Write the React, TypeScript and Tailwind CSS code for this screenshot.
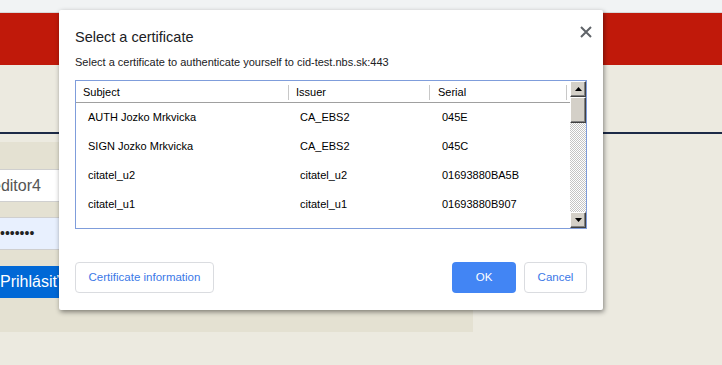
import React from 'react';

const rows = [
  { subject: 'AUTH Jozko Mrkvicka', issuer: 'CA_EBS2', serial: '045E' },
  { subject: 'SIGN Jozko Mrkvicka', issuer: 'CA_EBS2', serial: '045C' },
  { subject: 'citatel_u2', issuer: 'citatel_u2', serial: '01693880BA5B' },
  { subject: 'citatel_u1', issuer: 'citatel_u1', serial: '01693880B907' },
  { subject: 'citatel_u0', issuer: 'citatel_u0', serial: '01693880B6F1' },
];

function ScrollArrow({ up }: { up?: boolean }) {
  return (
    <div className="flex h-[16px] w-[16px] items-center justify-center border border-t-white border-l-white border-r-[#404040] border-b-[#404040] bg-[#d4d0c8] shadow-[inset_-1px_-1px_0_#808080]">
      <svg width="7" height="4" viewBox="0 0 7 4">
        {up ? <path d="M3.5 0 L7 4 L0 4 Z" fill="#000" /> : <path d="M0 0 L7 0 L3.5 4 Z" fill="#000" />}
      </svg>
    </div>
  );
}

function CertDialog() {
  return (
    <div className="absolute left-[59px] top-[10px] w-[544px] rounded-[2px] bg-white px-[16px] pb-[17px] pt-[17px] shadow-[1px_2px_5px_rgba(0,0,0,0.45)] font-['Liberation_Sans',sans-serif]">
      <button className="absolute right-[11px] top-[16px] text-[#5f6368]">
        <svg width="12" height="12" viewBox="0 0 12 12">
          <path d="M1 1 L11 11 M11 1 L1 11" stroke="currentColor" strokeWidth="2" />
        </svg>
      </button>
      <div className="h-[20px] text-[14.5px] leading-[20px] text-[#202124]">Select a certificate</div>
      <div className="mt-[7px] h-[16px] text-[11px] leading-[16px] text-[#202124]">
        Select a certificate to authenticate yourself to cid-test.nbs.sk:443
      </div>

      <div className="mt-[10px] flex h-[149px] border border-[#7f9ddb] text-[11px] text-black">
        <div className="flex-1 overflow-hidden">
          <div className="flex h-[22px] items-center border-b border-[#a0a0a0] pt-[2px]">
            <div className="flex w-[213px] items-center justify-between pl-[7px]">
              <span>Subject</span>
              <span className="h-[15px] w-px bg-[#c8c8c8]" />
            </div>
            <div className="flex w-[141px] items-center justify-between pl-[7px]">
              <span>Issuer</span>
              <span className="h-[15px] w-px bg-[#c8c8c8]" />
            </div>
            <div className="flex w-[137px] items-center justify-between pl-[8px]">
              <span>Serial</span>
              <span className="h-[15px] w-px bg-[#c8c8c8]" />
            </div>
          </div>
          {rows.map((r) => (
            <div key={r.subject} className="flex h-[29px] items-center">
              <div className="w-[213px] pl-[12px]">{r.subject}</div>
              <div className="w-[141px] pl-[11px]">{r.issuer}</div>
              <div className="w-[137px] pl-[12px]">{r.serial}</div>
            </div>
          ))}
        </div>
        <div className="flex w-[16px] flex-col">
          <ScrollArrow up />
          <div className="h-[26px] border border-t-white border-l-white border-r-[#404040] border-b-[#404040] bg-[#d4d0c8] shadow-[inset_-1px_-1px_0_#808080]" />
          <div className="flex-1 bg-[repeating-conic-gradient(#c4c4c4_0_25%,#ffffff_0_50%)] bg-[length:2px_2px]" />
          <ScrollArrow />
        </div>
      </div>

      <div className="mt-[33px] flex h-[31px] items-stretch text-[11.5px]">
        <button className="w-[139px] rounded-[4px] border border-[#dadce0] bg-white text-[#3b78e7]">
          Certificate information
        </button>
        <div className="flex-1" />
        <button className="w-[64px] rounded-[4px] bg-[#4285f4] text-white">OK</button>
        <button className="ml-[8px] w-[63px] rounded-[4px] border border-[#dadce0] bg-white text-[#3b78e7]">
          Cancel
        </button>
      </div>
    </div>
  );
}

export default function App() {
  return (
    <div className="relative h-[365px] w-[722px] overflow-hidden bg-[#eceae0] font-['Liberation_Sans',sans-serif]">
      <div className="h-[13px] border-b border-[#d8d8d8] bg-[#f1f3f4]" />
      <div className="h-[52px] bg-[#c0190a]" />
      <div className="pt-[67px]">
        <div className="h-[2px] bg-[#1c2a47]" />
        <div className="mt-[8px] w-[473px] bg-[#e4e1d2] pb-[34px] pt-[27px]">
          <div className="ml-[-21px] flex w-[300px] flex-col">
            <div className="flex h-[33px] items-center border border-[#cfcfcf] bg-white px-[12px] text-[16px] text-[#555]">
              editor4
            </div>
            <div className="mt-[15px] flex h-[33px] items-center border border-[#cfcfcf] bg-[#e8f0fe] pl-[20px] text-[14px] text-[#222]">
              •••••••
            </div>
            <div className="mt-[16px] flex h-[32px] items-center bg-[#0068d6] pl-[21px] text-[16px] text-white">
              Prihlásiť
            </div>
          </div>
        </div>
      </div>
      <CertDialog />
    </div>
  );
}
